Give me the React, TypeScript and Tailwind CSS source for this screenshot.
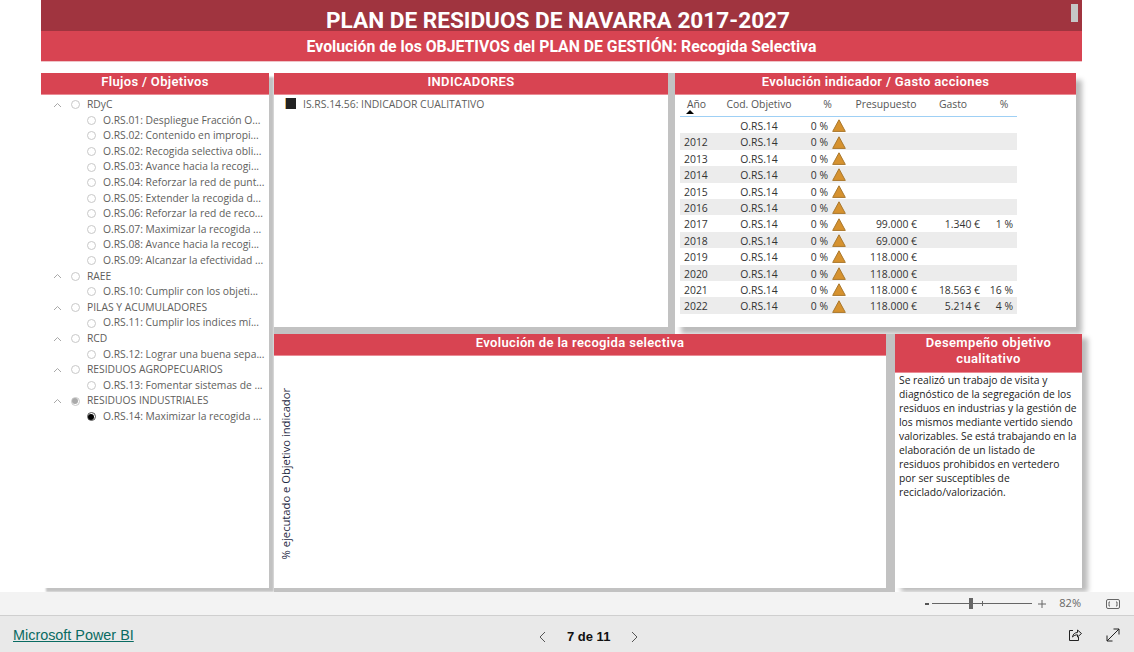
import React from "react";

const tree: [number, string, boolean?][] = [
  [0, "RDyC"],
  [1, "O.RS.01: Despliegue Fracción O..."],
  [1, "O.RS.02: Contenido en impropi..."],
  [1, "O.RS.02: Recogida selectiva obli..."],
  [1, "O.RS.03: Avance hacia la recogi..."],
  [1, "O.RS.04: Reforzar la red de punt..."],
  [1, "O.RS.05: Extender la recogida d..."],
  [1, "O.RS.06: Reforzar la red de reco..."],
  [1, "O.RS.07: Maximizar la recogida ..."],
  [1, "O.RS.08: Avance hacia la recogi..."],
  [1, "O.RS.09: Alcanzar la efectividad ..."],
  [0, "RAEE"],
  [1, "O.RS.10: Cumplir con los objeti..."],
  [0, "PILAS Y ACUMULADORES"],
  [1, "O.RS.11: Cumplir los indices mí..."],
  [0, "RCD"],
  [1, "O.RS.12: Lograr una buena sepa..."],
  [0, "RESIDUOS AGROPECUARIOS"],
  [1, "O.RS.13: Fomentar sistemas de ..."],
  [0, "RESIDUOS INDUSTRIALES", true],
  [1, "O.RS.14: Maximizar la recogida ...", true],
];

const rows = [
  ["", "", "", ""],
  ["2012", "", "", ""],
  ["2013", "", "", ""],
  ["2014", "", "", ""],
  ["2015", "", "", ""],
  ["2016", "", "", ""],
  ["2017", "99.000 €", "1.340 €", "1 %"],
  ["2018", "69.000 €", "", ""],
  ["2019", "118.000 €", "", ""],
  ["2020", "118.000 €", "", ""],
  ["2021", "118.000 €", "18.563 €", "16 %"],
  ["2022", "118.000 €", "5.214 €", "4 %"],
];

const sans = "font-['Open_Sans','Noto_Sans',sans-serif]";
const din = "font-['Roboto','Liberation_Sans',sans-serif]";
const cols = "grid grid-cols-[33px_92px_45px_71px_64px_32px]";

function Title({ children, className = "" }: { children: React.ReactNode; className?: string }) {
  return (
    <div className={`bg-[#d84452] border-b border-[#ea8c95] text-white text-center font-semibold text-[13px] tracking-[0.35px] leading-[16px] ${din} ${className}`}>
      {children}
    </div>
  );
}

function Radio({ state }: { state: "off" | "grey" | "on" }) {
  if (state === "on")
    return (
      <span className="w-[9px] h-[9px] rounded-full border border-[#555] flex items-center justify-center shrink-0">
        <span className="w-[6px] h-[6px] rounded-full bg-black" />
      </span>
    );
  if (state === "grey")
    return (
      <span className="w-[9px] h-[9px] rounded-full border border-[#c8c8c8] flex items-center justify-center shrink-0">
        <span className="w-[6px] h-[6px] rounded-full bg-[#aaa]" />
      </span>
    );
  return <span className="w-[9px] h-[9px] rounded-full border border-[#c8c8c8] bg-white shrink-0" />;
}

function Tri() {
  return (
    <svg width="14" height="13" viewBox="0 0 14 13" className="shrink-0 -mt-[2px]">
      <path d="M7 0.8 13.3 12.4H0.7Z" fill="#d6922f" stroke="#a9772c" strokeWidth="1" />
    </svg>
  );
}

export default function App() {
  return (
    <div className={`w-[1134px] h-[652px] overflow-hidden bg-white flex flex-col ${sans}`}>
      <main className="flex-1 min-h-0 pl-[41px] pr-[52px]">
        <header className="relative bg-[#a0343f] h-[31px] pr-[7px] text-white text-center font-bold text-[22.6px] leading-[41px] font-['Roboto',sans-serif]">
          PLAN DE RESIDUOS DE NAVARRA 2017-2027
          <div className="absolute right-[4px] top-[4px] w-[7px] h-[18px] bg-[#c6c6c6]" />
        </header>
        <div className={`bg-[#d84452] h-[31px] border-b border-[#efc4c8] text-white text-center font-bold text-[15.8px] leading-[31px] ${din}`}>
          Evolución de los OBJETIVOS del PLAN DE GESTIÓN: Recogida Selectiva
        </div>

        <div className="mt-[11px] flex gap-[5px]">
          <aside className="w-[228px] h-[515px] bg-white shadow-[5px_4px_2px_#c2c2c2] shrink-0">
            <Title className="h-[22px] pt-[1px]">Flujos / Objetivos</Title>
            <div className="pt-[2px] text-[10.3px] text-[#605e5c]">
              {tree.map(([lvl, label, sel], i) => (
                <div key={i} className={`h-[15.6px] flex items-center whitespace-nowrap ${lvl ? "pl-[45.5px]" : "pl-[12px]"}`}>
                  {!lvl && (
                    <svg width="9" height="6" viewBox="0 0 9 6" className="mr-[8.5px] shrink-0">
                      <path d="M1 5 4.5 1.5 8 5" fill="none" stroke="#a8a8a8" strokeWidth="1" />
                    </svg>
                  )}
                  <Radio state={sel ? (lvl ? "on" : "grey") : "off"} />
                  <span className="ml-[7.5px]">{label}</span>
                </div>
              ))}
            </div>
          </aside>

          <div className="w-[808px] shrink-0 flex flex-col gap-[7px]">
            <div className="flex gap-[7px] h-[254px]">
              <section className="w-[394px] bg-white shadow-[0_7px_0_#c2c2c2,7px_0_0_#c2c2c2,7px_7px_0_#c2c2c2]">
                <Title className="h-[22px] pt-[1px]">INDICADORES</Title>
                <div className="pt-[2px] pl-[11px] flex items-center gap-[7px] text-[10.4px] text-[#605e5c]">
                  <span className="w-[11px] h-[11px] bg-[#222] border-l border-[#e0b060] -mt-[2px]" />
                  <span className="leading-[15px]">IS.RS.14.56: INDICADOR CUALITATIVO</span>
                </div>
              </section>
              <section className="w-[401px] bg-white shadow-[6px_7px_5px_#bcbcbc]">
                <Title className="h-[22px] pt-[1px]">Evolución indicador / Gasto acciones</Title>
                <div className="ml-[5px] w-[337px] text-[10.4px] text-[#333]">
                  <div className={`${cols} h-[22px] border-b border-[#9fd0f5] text-[#555] items-start pt-[2px] text-center`}>
                    <span className="relative">
                      Año
                      <span className="absolute left-[6px] top-[13px] w-0 h-0 border-l-[4px] border-r-[4px] border-b-[4px] border-l-transparent border-r-transparent border-b-black" />
                    </span>
                    <span>Cod. Objetivo</span>
                    <span>%</span>
                    <span className="pl-[1px]">Presupuesto</span>
                    <span>Gasto</span>
                    <span className="pl-[6px]">%</span>
                  </div>
                  {rows.map((r, i) => (
                    <div key={i} className={`${cols} h-[16.4px] pt-[2px] items-center ${i % 2 ? "bg-[#ececec]" : "bg-white"}`}>
                      <span className="pl-[4px]">{r[0]}</span>
                      <span className="text-center">O.RS.14</span>
                      <span className="flex items-center justify-end gap-[4px] mr-[4px] h-[15px]">
                        <span>0 %</span>
                        <Tri />
                      </span>
                      <span className="text-right pr-[4px] col-start-4">{r[1]}</span>
                      <span className="text-right pr-[5px]">{r[2]}</span>
                      <span className="text-right pr-[4px]">{r[3]}</span>
                    </div>
                  ))}
                </div>
              </section>
            </div>

            <div className="flex gap-[9px] h-[254px]">
              <section className="w-[612px] bg-white shadow-[0_4px_0_#c2c2c2,9px_0_0_#c2c2c2,9px_4px_0_#c2c2c2] flex flex-col">
                <Title className="h-[22px] pt-[1px]">Evolución de la recogida selectiva</Title>
                <div className="flex-1 relative">
                  <span className="absolute left-[4px] bottom-[29px] text-[11.2px] text-[#1f2a44] [writing-mode:vertical-rl] rotate-180 whitespace-nowrap">
                    % ejecutado e Objetivo indicador
                  </span>
                </div>
              </section>
              <section className="w-[187px] bg-white shadow-[6px_4px_5px_#bcbcbc]">
                <Title className="h-[39px] pt-[1px]">
                  Desempeño objetivo
                  <br />
                  cualitativo
                </Title>
                <p className="pl-[4px] text-[10.3px] leading-[14px] text-[#222] whitespace-nowrap">
                  Se realizó un trabajo de visita y<br />
                  diagnóstico de la segregación de los<br />
                  residuos en industrias y la gestión de<br />
                  los mismos mediante vertido siendo<br />
                  valorizables. Se está trabajando en la<br />
                  elaboración de un listado de<br />
                  residuos prohibidos en vertedero<br />
                  por ser susceptibles de<br />
                  reciclado/valorización.
                </p>
              </section>
            </div>
          </div>
        </div>
      </main>

      <div className="h-[24px] bg-[#f3f3f3] border-b border-[#cfcfcf] flex items-center justify-end text-[#666] text-[11px] shrink-0">
        <svg width="4" height="2" viewBox="0 0 4 2" className="mr-[3px]"><rect width="4" height="2" fill="#555" /></svg>
        <div className="relative w-[100px] h-px bg-[#666] mr-[6px]">
          <span className="absolute left-[37px] -top-[5px] w-[4px] h-[11px] bg-[#666]" />
          <span className="absolute left-[50px] -top-[2px] w-px h-[5px] bg-[#666]" />
        </div>
        <svg width="8" height="8" viewBox="0 0 8 8" className="mr-[13px]"><path d="M0 4H8M4 0V8" stroke="#666" fill="none" /></svg>
        <span className="mr-[25px]">82%</span>
        <svg width="14" height="10" viewBox="0 0 14 10" className="mr-[14px]" fill="none" stroke="#666">
          <rect x="0.5" y="0.5" width="13" height="9" rx="1.5" />
          <path d="M4 3H3V7H4M10 3H11V7H10" />
        </svg>
      </div>

      <footer className="h-[36px] bg-[#e9e9e9] flex items-center relative shrink-0">
        <a className="ml-[13px] mt-[4px] text-[#096b62] underline text-[14.4px] font-['Liberation_Sans',sans-serif]">Microsoft Power BI</a>
        <div className="absolute left-[538px] top-[11px] flex items-center text-[13px] font-semibold text-[#111] font-['Liberation_Sans',sans-serif]">
          <svg width="10" height="12" viewBox="0 0 10 12" fill="none" stroke="#555" className="mr-[19px]"><path d="M7 1 2 6 7 11" /></svg>
          <span>7 de 11</span>
          <svg width="10" height="12" viewBox="0 0 10 12" fill="none" stroke="#555" className="ml-[19px]"><path d="M3 1 8 6 3 11" /></svg>
        </div>
        <svg width="14" height="14" viewBox="0 0 14 14" fill="none" stroke="#222" className="absolute left-[1068px] top-[12px]">
          <path d="M5 2.5H1.5V12.5H10.5V9" />
          <path d="M4.5 9C5 6 7 4.5 9.5 4.5V2L13.5 5.5 9.5 9V6.8C7.5 6.8 6 7.5 4.5 9Z" />
        </svg>
        <svg width="14" height="14" viewBox="0 0 14 14" fill="none" stroke="#222" className="absolute left-[1106px] top-[12px]">
          <path d="M1 13 13 1M7.5 1H13V6.5M1 7.5V13H6.5" />
        </svg>
      </footer>
    </div>
  );
}
